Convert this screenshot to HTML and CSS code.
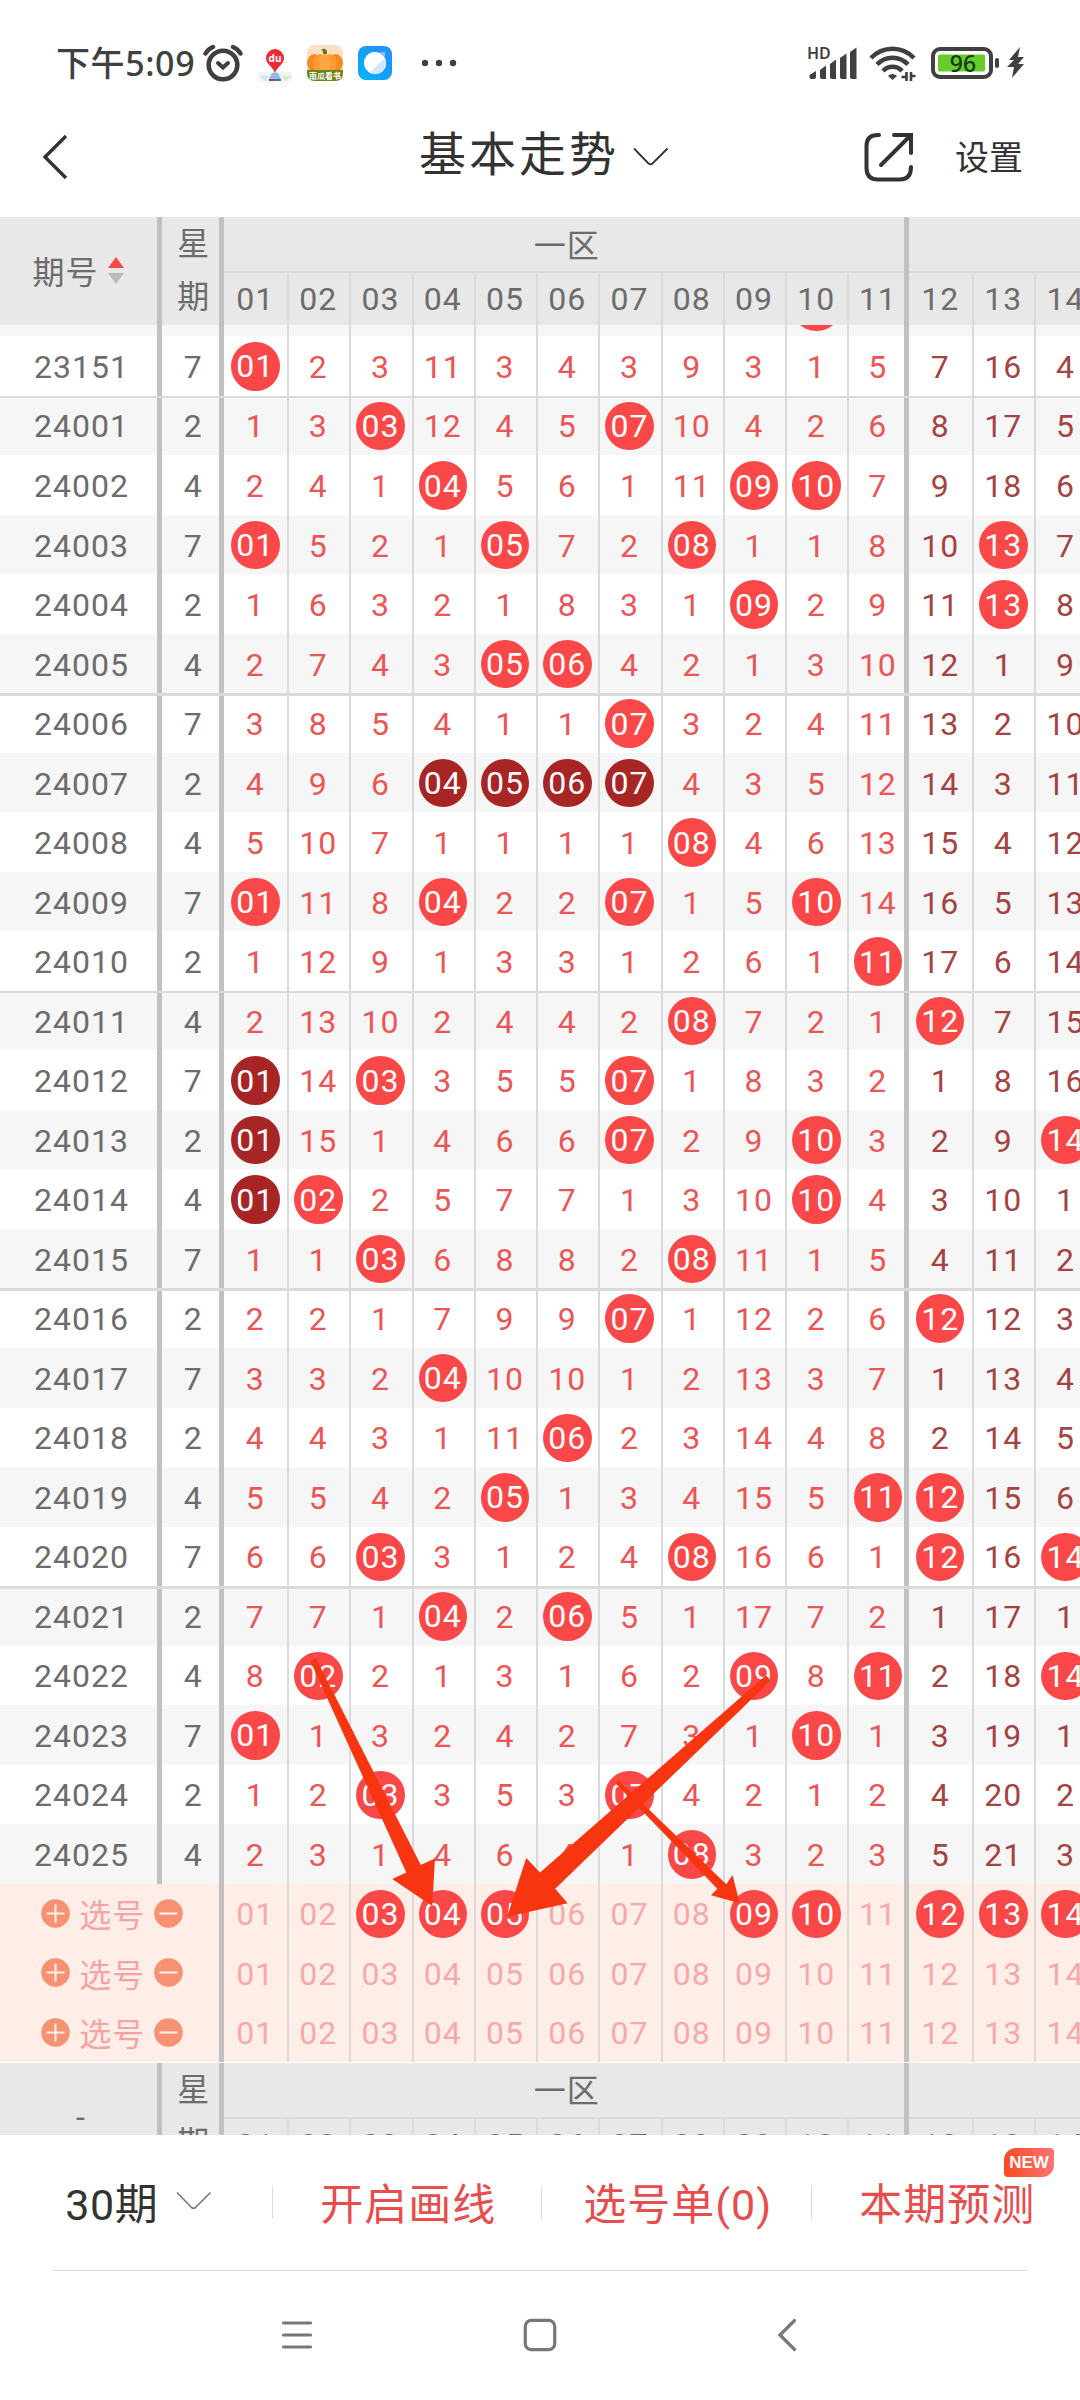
FILE: index.html
```html
<!DOCTYPE html>
<html lang="zh-CN">
<head>
    <meta charset="UTF-8">
    <meta name="viewport" content="width=device-width, initial-scale=1.0">
    <title>基本走势</title>
    <link rel="stylesheet" href="styles.css">
</head>
<body>
    <!-- Phone status bar -->
    <div class="status-bar">
        <span class="clock">下午5:09</span>
        <svg class="alarm" width="40" height="38" viewBox="0 0 40 38" fill="none" stroke="#404040">
            <circle cx="20" cy="21" r="14.3" stroke-width="4.6"/>
            <path d="M2.5 9.5 Q5 5 10 3M37.5 9.5 Q35 5 30 3" stroke-width="4.4" stroke-linecap="round"/>
            <path d="M15 19 L20 23.5 L25 19" stroke-width="4" stroke-linecap="round"/>
        </svg>
        <svg class="app-map" width="34" height="35" viewBox="0 0 34 35">
            <path d="M0 26H34V33Q34 35 31 35H3Q0 35 0 33Z" fill="#f1f3f3"/>
            <path d="M2 30H11L7 35Z" fill="#c9e6f3"/>
            <path d="M23 30H33L28 35Z" fill="#d5ecc0"/>
            <path d="M14 27H20L23 33H11Z" fill="#8dbdee"/>
            <path d="M11 33H17V35H11Z" fill="#d92f3c"/>
            <path d="M17 33H23V35H17Z" fill="#2c72d8"/>
            <path d="M17 28C16 21 8 19 8 12A9 9 0 0 1 26 12C26 19 18 21 17 28Z" fill="#ef2a35"/>
            <text x="17" y="16" class="du">du</text>
        </svg>
        <svg class="app-pumpkin" width="36" height="36" viewBox="0 0 36 36">
            <rect width="36" height="36" rx="8" fill="#f9e0c4"/>
            <ellipse cx="7.500" cy="18" rx="7.500" ry="9" fill="#f58a22"/>
            <ellipse cx="28.500" cy="18" rx="7.500" ry="9" fill="#f58a22"/>
            <ellipse cx="13" cy="18" rx="7" ry="9" fill="#fb9a33"/>
            <ellipse cx="23" cy="18" rx="7" ry="9" fill="#fb9a33"/>
            <ellipse cx="18" cy="18" rx="6" ry="9" fill="#ffa640"/>
            <path d="M14 5Q18 2 20 6V9H16V6Z" fill="#5c7d16"/>
            <path d="M0 25H36V28Q36 36 28 36H8Q0 36 0 28Z" fill="#6b8317"/>
            <circle cx="30" cy="30" r="3" fill="#f58a3c"/>
            <text x="18" y="33.500" class="book">南瓜看书</text>
        </svg>
        <svg class="app-blue" width="34" height="34" viewBox="0 0 34 34">
            <defs>
                <linearGradient id="blue" x1="0" y1="1" x2="1" y2="0">
                    <stop offset="0" stop-color="#00b4ff"/>
                    <stop offset="1" stop-color="#2a8cf5"/>
                </linearGradient>
            </defs>
            <rect width="34" height="34" rx="8" fill="url(#blue)"/>
            <path d="M22 6H27V11Z" fill="#8cc4fb"/>
            <circle cx="17" cy="17" r="11" fill="#fff"/>
            <path d="M27 12A11 11 0 0 1 11.500 26.500Z" fill="#d4e8fc"/>
        </svg>
        <svg class="more" width="36" height="8" viewBox="0 0 36 8" fill="#404040">
            <circle cx="4" cy="4" r="3.200"/><circle cx="18" cy="4" r="3.200"/><circle cx="32" cy="4" r="3.200"/>
        </svg>
        <svg class="signal" width="50" height="34" viewBox="0 0 50 34" fill="#404040">
            <text x="0" y="12.500" class="hd">HD</text>
            <path d="M2.500 29L9 25V31Q9 33 7 33H4.500Q2.500 33 2.500 31Z"/>
            <path d="M13 24L19 19.500V33H15Q13 33 13 31Z"/>
            <path d="M23 18L29 13.500V33H25Q23 33 23 31Z"/>
            <path d="M33 12L39.500 7.500V33H35Q33 33 33 31Z"/>
            <path d="M43 6L49.500 1.500V33H45Q43 33 43 31Z"/>
        </svg>
        <svg class="wifi" width="48" height="37" viewBox="0 0 48 37" fill="none" stroke="#404040" stroke-width="4.500">
            <path d="M2 13A29.500 29.500 0 0 1 45 13"/>
            <path d="M8 19.500A21 21 0 0 1 39 19.500"/>
            <path d="M14 26A13 13 0 0 1 33 26"/>
            <path d="M19 31Q23.500 27 28 31L23.500 35Z" fill="#404040" stroke="none"/>
            <path d="M37.500 27V36M32.500 32H38.500M42 27V36M41 31H46.500" stroke-width="2.600"/>
        </svg>
        <svg class="battery" width="68" height="32" viewBox="0 0 68 32">
            <rect x="2" y="2" width="58" height="28" rx="7" fill="#fff" stroke="#404040" stroke-width="4"/>
            <rect x="7" y="7.500" width="47" height="17" rx="1.500" fill="#66cc2b"/>
            <rect x="64" y="11" width="4" height="10" rx="2" fill="#404040"/>
            <text x="32" y="24.500" class="level">96</text>
        </svg>
        <svg class="bolt" width="18" height="32" viewBox="0 0 18 32" fill="#404040">
            <path d="M13 0L2 13H7L0 20H7L5 31L17 17H11L17 10H11Z"/>
        </svg>
    </div>

    <!-- Title bar -->
    <div class="title-bar">
        <svg class="back" width="26" height="46" viewBox="0 0 26 46" fill="none" stroke="#333" stroke-width="3.400">
            <path d="M24 2L3 23L24 44"/>
        </svg>
        <h1>基本走势</h1>
        <svg class="arrow-down" width="36" height="20" viewBox="0 0 36 20" fill="none" stroke="#333" stroke-width="1.800">
            <path d="M1 1.500L15.500 16.500Q17.500 18 19.500 16.500L34.500 1.500"/>
        </svg>
        <svg class="share" width="50" height="50" viewBox="0 0 50 50" fill="none" stroke="#333" stroke-width="4" stroke-linecap="round">
            <path d="M15 3H14Q2.500 3 2.500 14V36Q2.500 47.500 14 47.500H36Q47 47.500 47 35"/>
            <path d="M30 3H47V21M46 4L17 33"/>
        </svg>
        <span class="settings">设置</span>
    </div>

    <!-- Trend chart, filled by the script below -->
    <div class="chart">
        <div class="head">
            <div class="head-period">期号
                <svg width="16" height="27" viewBox="0 0 16 27">
                    <path d="M8 0L16 11H0Z" fill="#fa4848"/>
                    <path d="M8 27L16 16H0Z" fill="#bbb"/>
                </svg>
            </div>
            <div class="head-week"><span>星</span><span>期</span></div>
            <div class="zone">一区</div>
            <div class="zone zone-two"></div>
        </div>
        <div class="viewport" id="rows"></div>
        <div class="head foot">
            <div class="head-period">-</div>
            <div class="head-week"><span>星</span><span>期</span></div>
            <div class="zone">一区</div>
            <div class="zone zone-two"></div>
        </div>
        <svg class="arrows" width="1080" height="1918" viewBox="0 217 1080 1918" fill="#f73510">
            <path d="M310.600 1661.500L315.800 1658L420.800 1865L435 1858.500L432.200 1906L392.200 1879L406.300 1872.500Z"/>
            <path d="M765.900 1675.300L770.700 1680.700L555.200 1888.700L567.500 1903.300L507.200 1916.700L526.200 1858L540 1872.500Z"/>
            <path d="M615.400 1783.300L618.500 1780L726.300 1884.300L732.500 1875L739.700 1903.300L711.100 1895.300L717.300 1888.700Z"/>
        </svg>
    </div>

    <!-- Bottom tool bar -->
    <div class="tool-bar">
        <div class="tool tool-dark">30期
            <svg width="36" height="20" viewBox="0 0 36 20" fill="none" stroke="#777" stroke-width="1.600">
                <path d="M1 1.500L15.500 16.500Q17.500 18 19.500 16.500L34.500 1.500"/>
            </svg>
        </div>
        <div class="tool">开启画线</div>
        <div class="tool">选号单(0)</div>
        <div class="tool">本期预测<span class="badge">NEW</span></div>
    </div>

    <!-- System navigation -->
    <div class="nav-bar">
        <svg width="32" height="34" viewBox="0 0 32 34" fill="none" stroke="#777" stroke-width="3.200" stroke-linecap="round">
            <path d="M2.500 5H29.500M2.500 17H29.500M2.500 29H29.500"/>
        </svg>
        <svg class="home" width="34" height="34" viewBox="0 0 34 34" fill="none" stroke="#777" stroke-width="3.200">
            <rect x="2.300" y="2.300" width="29.400" height="29.400" rx="6"/>
        </svg>
        <svg width="20" height="34" viewBox="0 0 20 34" fill="none" stroke="#777" stroke-width="3.200" stroke-linecap="round">
            <path d="M17.500 2.500L3 17L17.500 31.500"/>
        </svg>
    </div>

    <script>
        // Miss counts before the first visible draw
        const misses = [0, 1, 2, 10, 2, 3, 2, 8, 2, 0, 4, 6, 15, 3];

        // [period, weekday, drawn numbers up to 14, repeated numbers (dark balls)]
        const draws = [
            ['23151', 7, [1]],
            ['24001', 2, [3, 7]],
            ['24002', 4, [4, 9, 10]],
            ['24003', 7, [1, 5, 8, 13]],
            ['24004', 2, [9, 13]],
            ['24005', 4, [5, 6]],
            ['24006', 7, [7]],
            ['24007', 2, [4, 5, 6, 7], [4, 5, 6, 7]],
            ['24008', 4, [8]],
            ['24009', 7, [1, 4, 7, 10]],
            ['24010', 2, [11]],
            ['24011', 4, [8, 12]],
            ['24012', 7, [1, 3, 7], [1]],
            ['24013', 2, [1, 7, 10, 14], [1]],
            ['24014', 4, [1, 2, 10], [1]],
            ['24015', 7, [3, 8]],
            ['24016', 2, [7, 12]],
            ['24017', 7, [4]],
            ['24018', 2, [6]],
            ['24019', 4, [5, 11, 12]],
            ['24020', 7, [3, 8, 12, 14]],
            ['24021', 2, [4, 6]],
            ['24022', 4, [2, 9, 11, 14]],
            ['24023', 7, [1, 10]],
            ['24024', 2, [3, 7]],
            ['24025', 4, [8]]
        ];
        const picks = [[3, 4, 5, 9, 10, 12, 13, 14], [], []];

        const pad = n => String(n).padStart(2, '0');
        const ball = (n, dark) => `<b class="ball${dark ? ' dark' : ''}">${pad(n)}</b>`;

        // Wrap 14 cells, adding the zone classes
        function cells(render) {
            return misses.map((_, i) => `<div class="cell c${i + 1}${i > 10 ? ' two' : ''}">${render(i + 1)}</div>`).join('');
        }

        // End of the row hidden under the header
        let html = `<div class="row sliver">
            <div class="period"></div><div class="week"></div>${cells(n => n === 10 ? '<b class="ball"></b>' : '')}</div>`;

        draws.forEach(([period, week, hits, dark = []], r) => {
            html += `<div class="row${r % 2 ? ' odd' : ''}${r % 5 === 1 ? ' line' : ''}">
                <div class="period">${period}</div><div class="week">${week}</div>`;
            html += cells(n => {
                misses[n - 1] = hits.includes(n) ? 0 : misses[n - 1] + 1;
                return hits.includes(n) ? ball(n, dark.includes(n)) : misses[n - 1];
            });
            html += '</div>';
        });

        // Rows where the user picks numbers
        picks.forEach(list => {
            html += `<div class="row pick">
                <div class="pick-label">
                    <svg width="29" height="29" viewBox="0 0 29 29"><circle cx="14.500" cy="14.500" r="14.300" fill="#f69271"/><path d="M5.500 14.500H23.500M14.500 5.500V23.500" stroke="#feeee7" stroke-width="2.200"/></svg>
                    选号
                    <svg width="29" height="29" viewBox="0 0 29 29"><circle cx="14.500" cy="14.500" r="14.300" fill="#f69271"/><path d="M5.500 14.500H23.500" stroke="#feeee7" stroke-width="2.200"/></svg>
                </div>${cells(n => list.includes(n) ? ball(n) : pad(n))}</div>`;
        });
        document.getElementById('rows').innerHTML = html;

        // Number row of both headers
        document.querySelectorAll('.head').forEach(head => head.insertAdjacentHTML('beforeend', cells(pad)));
    </script>
</body>
</html>
```

FILE: styles.css
```css
body {
    margin: 0;
    width: 1080px;
    height: 2400px;
    overflow: hidden;
    background-color: #fff;
    font-family: Roboto, "Noto Sans CJK SC", sans-serif;
    color: #333;
}

svg {
    display: block;
    flex-shrink: 0;
}

/* Status bar */
.status-bar {
    display: flex;
    align-items: center;
    height: 96px;
    padding: 30px 0 0 56px;
    box-sizing: border-box;
}

.clock {
    width: 147px;
    font: 500 34px/40px "Noto Sans", "Noto Sans CJK SC", sans-serif;
    letter-spacing: 0.6px;
    color: #404040;
    white-space: nowrap;
}

.app-map,
.app-pumpkin,
.app-blue {
    margin-left: 15px;
}

.more {
    margin-left: 29px;
}

.signal {
    margin-left: 350px;
}

.wifi {
    margin-left: 12px;
}

.battery {
    margin-left: 14px;
}

.bolt {
    margin-left: 8px;
}

.du {
    font: bold 10px "Noto Sans", sans-serif;
    fill: #fff;
    text-anchor: middle;
}

.book {
    font: bold 8px "Noto Sans CJK SC", sans-serif;
    fill: #fff;
    text-anchor: middle;
}

.hd {
    font: 600 16px "Noto Sans", sans-serif;
}

.level {
    font: 500 23px "Noto Sans", sans-serif;
    fill: #143a06;
    text-anchor: middle;
}

/* Title bar */
.title-bar {
    display: flex;
    align-items: center;
    height: 121px;
    padding-left: 42px;
    box-sizing: border-box;
}

h1 {
    margin: -3px 0 0 351px;
    width: 202px;
    font-size: 47px;
    font-weight: 400;
    line-height: 60px;
    letter-spacing: 3px;
    white-space: nowrap;
}

.arrow-down {
    margin-left: 12px;
}

.share {
    margin-left: 195px;
}

.settings {
    margin: -3px 0 0 41px;
    font-size: 34px;
    white-space: nowrap;
}

/* Chart */
.chart {
    position: relative;
    height: 1918px;
    overflow: hidden;
    font-size: 32px;
    letter-spacing: 1px;
    color: #6c6c6c;
}

.head,
.row {
    display: grid;
    grid-template-columns: 157px 62.4px 67.8px repeat(9, 62.25px) 56.85px 67.9px 62.25px 62.25px;
}

.head {
    grid-template-rows: 54px 54px;
    background-color: #e8e8e8;
}

.head-period {
    grid-row: 1 / 3;
    grid-column: 1;
    display: flex;
    align-items: center;
    justify-content: center;
    gap: 9px;
    padding: 0 1px 2px 0;
}

.foot .head-period {
    padding: 1px 0 0 5px;
}

.head-week {
    grid-row: 1 / 3;
    grid-column: 2;
    display: flex;
    flex-direction: column;
    align-items: center;
    border-left: 5px solid #c1c1c1;
    padding: 1px 0 0 6px;
    line-height: 53px;
}

.zone {
    grid-row: 1;
    grid-column: 3 / 14;
    display: flex;
    align-items: center;
    justify-content: center;
    border-left: 5px solid #c1c1c1;
    padding: 0 0 3px 5px;
}

.zone-two {
    grid-column: 14 / 17;
}

.viewport {
    height: 1737.8px;
    overflow: hidden;
}

.row {
    position: relative;
    grid-template-rows: 59.52px;
    background-color: #fff;
}

.row.odd,
.row.sliver {
    background-color: #f6f6f6;
}

.row.sliver {
    margin-top: -48.3px;
}

/* Thin rule between groups of five draws */
.row.line::before {
    content: "";
    position: absolute;
    top: 0;
    left: 0;
    width: 100%;
    height: 2.5px;
    background-color: #dadada;
}

.period,
.week,
.cell,
.pick-label {
    display: flex;
    align-items: center;
    justify-content: center;
}

.period {
    padding: 2px 0 0 6px;
}

.week {
    border-left: 5px solid #c1c1c1;
    padding: 2px 0 0 5px;
}

.cell {
    border-left: 2px solid #dadada;
    padding: 2px 2px 0 0;
    color: #ec5555;
}

.cell.c1,
.cell.c12 {
    border-left: 5px solid #c1c1c1;
    padding-right: 1px;
}

.cell.c11 {
    padding-right: 0;
    padding-left: 2px;
}

.cell.two {
    color: #a54242;
}

.head .cell {
    grid-row: 2;
    color: #6c6c6c;
    background: linear-gradient(#dadada, #dadada) no-repeat 0 0 / 100% 2px;
}

.ball {
    display: flex;
    align-items: center;
    justify-content: center;
    flex-shrink: 0;
    width: 48.5px;
    height: 48.5px;
    margin-top: -1px;
    border-radius: 50%;
    background-color: #fa4848;
    color: #fff;
    font-weight: 400;
}

.ball.dark {
    background-color: #a82526;
}

/* Pick rows */
.row.pick {
    background-color: #feeee7;
}

.pick-label {
    grid-column: 1 / 3;
    gap: 9px;
    padding-left: 5px;
    color: #f5a3a3;
}

.row.pick .cell {
    color: #f5a9a9;
}

.row.pick .ball {
    color: #fff;
}

.arrows {
    position: absolute;
    top: 0;
    left: 0;
}

/* Bottom bars */
.tool-bar {
    display: flex;
    align-items: center;
    height: 135px;
}

.tool {
    position: relative;
    flex: 1;
    display: flex;
    align-items: center;
    justify-content: center;
    height: 33px;
    padding: 0 0 3px 3px;
    box-sizing: border-box;
    font-size: 43px;
    letter-spacing: 1px;
    color: #e84d4d;
    white-space: nowrap;
}

.tool + .tool {
    border-left: 1px solid #ddd;
}

.tool-dark {
    gap: 18px;
    padding-left: 6px;
    letter-spacing: 0.5px;
    color: #333;
}

.badge {
    position: absolute;
    right: 26px;
    top: -38px;
    width: 50px;
    height: 29px;
    border-radius: 12px 4px 12px 4px;
    background: linear-gradient(90deg, #fb4a22, #fc7474);
    color: #fff;
    font: bold 17px/30px "Liberation Sans", sans-serif;
    letter-spacing: 0;
    text-align: center;
}

.nav-bar {
    display: flex;
    align-items: center;
    justify-content: space-between;
    height: 129px;
    margin: 0 52px;
    padding: 0 231px 0 229px;
    border-top: 1px solid #ddd;
    box-sizing: border-box;
}

.home {
    margin-right: 11px;
}
```
